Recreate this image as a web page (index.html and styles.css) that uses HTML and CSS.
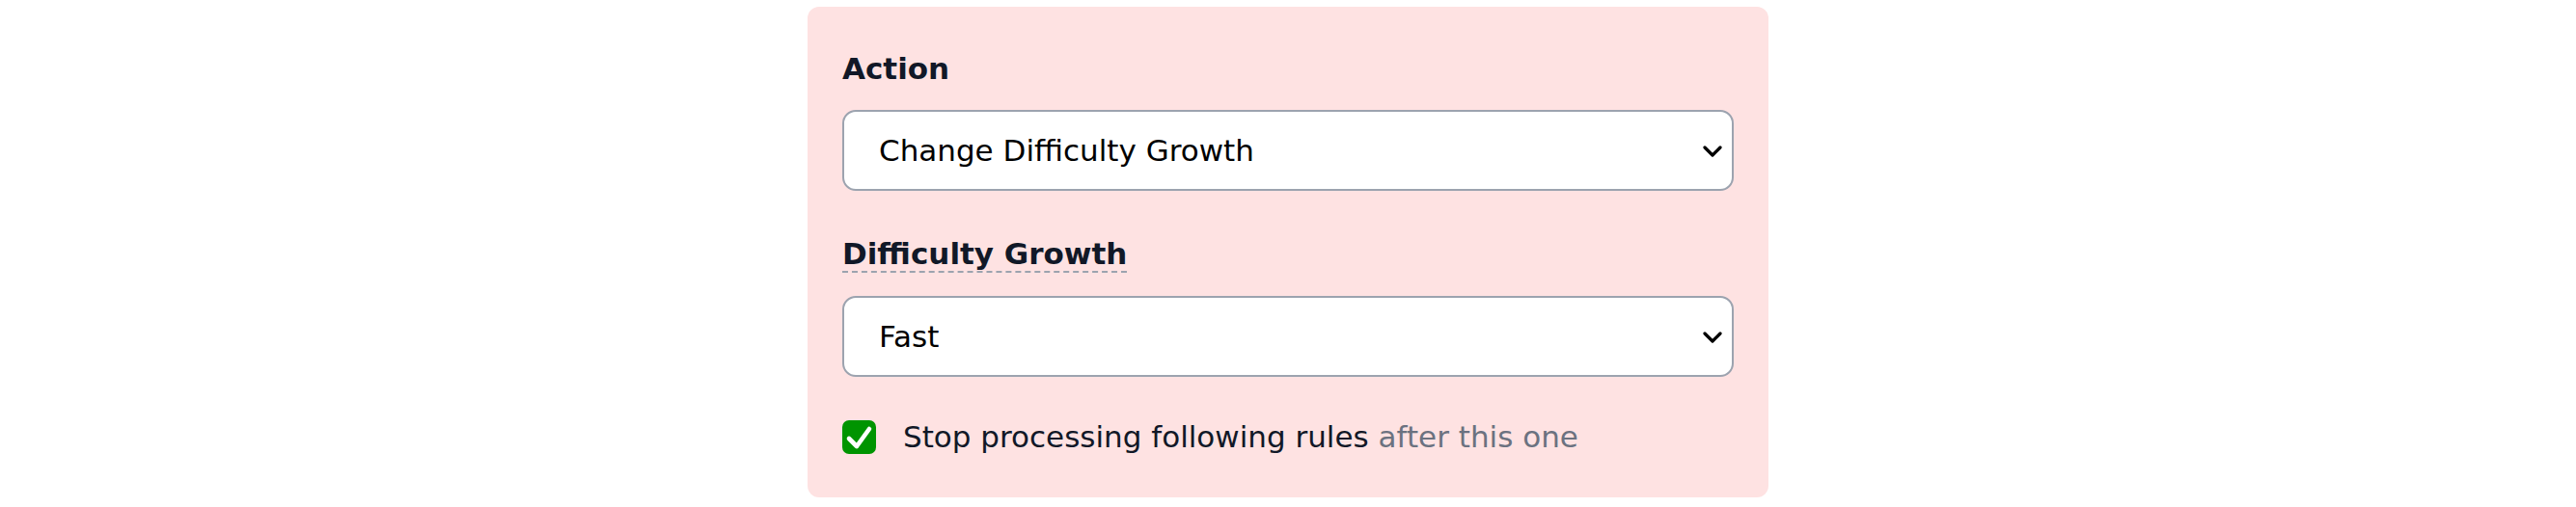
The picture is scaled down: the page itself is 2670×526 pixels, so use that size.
FILE: index.html
```html
<!DOCTYPE html>
<html>

<head>
    <meta name="viewport" content="width=device-width, initial-scale=1">
    <title>Rule Action</title>
    <link rel="stylesheet" href="styles.css">
</head>

<body>

    <div class="card">

        <div class="field">
            <label class="label" for="action_select">Action</label>
            <div class="select_wrap">
                <select id="action_select" class="select">
                    <option>Change Difficulty Growth</option>
                    <option>Change Priority</option>
                    <option>Set Tag</option>
                </select>
                <svg class="chevron" width="20" height="12" viewBox="0 0 20 12">
                    <path d="M2 2 L10 10 L18 2" fill="none" stroke="#000" stroke-width="3.2" stroke-linecap="round" stroke-linejoin="round" />
                </svg>
            </div>
        </div>

        <div class="field second">
            <label class="label" for="growth_select"><span class="hint" title="How fast the difficulty grows">Difficulty Growth</span></label>
            <div class="select_wrap">
                <select id="growth_select" class="select">
                    <option>Fast</option>
                    <option>Normal</option>
                    <option>Slow</option>
                </select>
                <svg class="chevron" width="20" height="12" viewBox="0 0 20 12">
                    <path d="M2 2 L10 10 L18 2" fill="none" stroke="#000" stroke-width="3.2" stroke-linecap="round" stroke-linejoin="round" />
                </svg>
            </div>
        </div>

        <label class="check_row">
            <span class="checkbox">
                <svg width="35" height="35" viewBox="0 0 35 35">
                    <path d="M7 19 L15 27 L28 9" fill="none" stroke="#fff" stroke-width="4.6" stroke-linecap="round" stroke-linejoin="round" />
                </svg>
            </span>
            <span class="check_text">Stop processing following rules <span class="muted">after this one</span></span>
        </label>

    </div>

</body>

</html>
```

FILE: styles.css
```css
body {
    margin: 0;
    background: #fff;
    font-family: "DejaVu Sans", Verdana, sans-serif;
}

.card {
    width: 924px;
    margin: 7px auto 0;
    padding: 41px 36px 40px;
    background: #fee2e2;
    border-radius: 12px;
}

.field.second {
    margin-top: 42px;
}

.label {
    display: block;
    font-size: 31px;
    line-height: 46px;
    font-weight: bold;
    color: #111827;
    margin-bottom: 20px;
}

.second .label {
    margin-bottom: 21px;
}

.hint {
    border-bottom: 2px dashed #9ca3af;
}

.select_wrap {
    position: relative;
}

.select {
    display: block;
    width: 100%;
    height: 84px;
    box-sizing: border-box;
    padding: 0 60px 0 36px;
    font-family: "DejaVu Sans", Verdana, sans-serif;
    font-size: 31px;
    color: #000;
    background: #fff;
    border: 2px solid #9ca3af;
    border-radius: 14px;
    appearance: none;
    -webkit-appearance: none;
    outline: none;
}

.chevron {
    position: absolute;
    right: 12px;
    top: 37px;
    pointer-events: none;
}

.check_row {
    display: flex;
    align-items: center;
    gap: 28px;
    margin-top: 39px;
    height: 46px;
    font-size: 31px;
    color: #111827;
}

.checkbox {
    display: flex;
    width: 35px;
    height: 35px;
    background: #009400;
    border-radius: 7px;
}

.muted {
    color: #6b7280;
}
```
